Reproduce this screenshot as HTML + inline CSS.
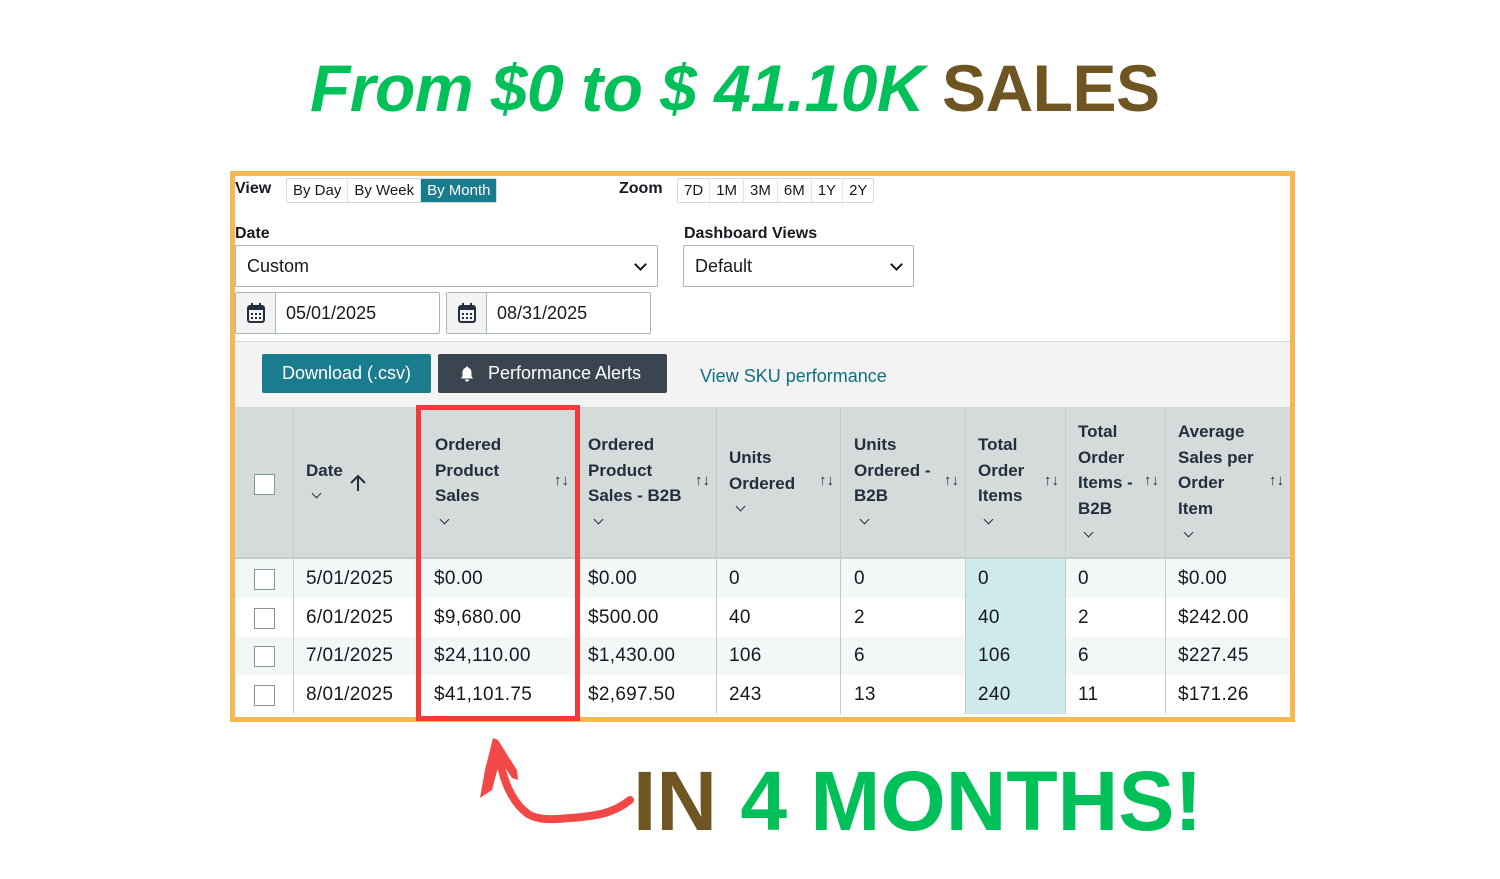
<!DOCTYPE html>
<html><head><meta charset="utf-8"><style>
*{margin:0;padding:0;box-sizing:border-box}
body{width:1500px;height:879px;background:#fff;position:relative;overflow:hidden;font-family:"Liberation Sans",sans-serif;color:#16191f}
.a{position:absolute}
.title{left:310px;top:50px;font-size:66px;font-weight:bold;font-style:italic;letter-spacing:-0.5px;white-space:nowrap}
.g{color:#00c05a}.b{color:#6e5522;font-style:normal}
.frame{left:230px;top:171px;width:1065px;height:551px;border:5px solid #f5b94f}
.seg{display:flex;border:1px solid #d5dbdb;border-radius:2px;font-size:15px}
.seg span{padding:3px 6px;border-right:1px solid #e3e6e6;color:#16191f}
.lbl{font-size:16px;font-weight:bold}
.sel{border:1px solid #aab7b8;border-radius:2px;height:42px;font-size:18px;padding:10px 11px;background:#fff}
.chev{position:absolute;right:12px;top:14px;width:9px;height:9px;border-right:2px solid #16191f;border-bottom:2px solid #16191f;transform:rotate(45deg)}
.cal{border:1px solid #aab7b8;border-radius:2px;height:42px;display:flex;background:#fff;font-size:18px}
.cal .ic{width:40px;border-right:1px solid #aab7b8;background:#f3f3f3;display:flex;align-items:center;justify-content:center}
.cal .tx{padding:10px 10px}
.hd{top:407px;left:235px;width:1055px;height:152px;background:#d5dbdb;border-bottom:2px solid #c4cbcb}
.col{position:absolute;top:407px;height:307px;border-left:1px solid #c4cbcb}
.h{position:absolute;font-size:17px;font-weight:bold;line-height:25.5px;color:#232f3e}
.row{position:absolute;left:235px;width:1055px;height:38.5px}
.c{position:absolute;font-size:19px;letter-spacing:.3px;color:#16191f}
.cb{position:absolute;left:254px;width:21px;height:21px;border:1px solid #879596;background:#fff}
.s{position:absolute;font-size:15px;font-weight:bold;color:#232f3e}
.v{position:absolute;width:7px;height:7px;border-right:1.5px solid #232f3e;border-bottom:1.5px solid #232f3e;transform:rotate(45deg)}
</style></head><body>
<div class="a title"><span class="g">From $0 to $ 41.10K</span> <span class="b">SALES</span></div>

<div class="a" style="left:235px;top:341px;width:1055px;height:66px;background:#f3f3f3;border-top:1px solid #d5dbdb"></div>

<div class="a lbl" style="left:235px;top:180px">View</div>
<div class="a seg" style="left:286px;top:178px"><span>By Day</span><span>By Week</span><span style="background:#1a7d8f;color:#fff;border:none">By Month</span></div>
<div class="a lbl" style="left:619px;top:180px">Zoom</div>
<div class="a seg" style="left:677px;top:178px"><span>7D</span><span>1M</span><span>3M</span><span>6M</span><span>1Y</span><span style="border:none">2Y</span></div>

<div class="a lbl" style="left:235px;top:225px">Date</div>
<div class="a sel" style="left:235px;top:245px;width:423px">Custom<div class="chev"></div></div>
<div class="a lbl" style="left:684px;top:225px">Dashboard Views</div>
<div class="a sel" style="left:683px;top:245px;width:231px">Default<div class="chev"></div></div>

<div class="a cal" style="left:235px;top:292px;width:205px"><div class="ic"><svg width="18" height="20" viewBox="0 0 18 20"><rect x="1" y="3" width="16" height="16" rx="2" fill="none" stroke="#232f3e" stroke-width="2"/><rect x="1" y="3" width="16" height="4" fill="#232f3e"/><rect x="4" y="0" width="2" height="5" fill="#232f3e"/><rect x="12" y="0" width="2" height="5" fill="#232f3e"/><g fill="#232f3e"><rect x="4" y="10" width="2" height="2"/><rect x="8" y="10" width="2" height="2"/><rect x="12" y="10" width="2" height="2"/><rect x="4" y="14" width="2" height="2"/><rect x="8" y="14" width="2" height="2"/><rect x="12" y="14" width="2" height="2"/></g></svg></div><div class="tx">05/01/2025</div></div>
<div class="a cal" style="left:446px;top:292px;width:205px"><div class="ic"><svg width="18" height="20" viewBox="0 0 18 20"><rect x="1" y="3" width="16" height="16" rx="2" fill="none" stroke="#232f3e" stroke-width="2"/><rect x="1" y="3" width="16" height="4" fill="#232f3e"/><rect x="4" y="0" width="2" height="5" fill="#232f3e"/><rect x="12" y="0" width="2" height="5" fill="#232f3e"/><g fill="#232f3e"><rect x="4" y="10" width="2" height="2"/><rect x="8" y="10" width="2" height="2"/><rect x="12" y="10" width="2" height="2"/><rect x="4" y="14" width="2" height="2"/><rect x="8" y="14" width="2" height="2"/><rect x="12" y="14" width="2" height="2"/></g></svg></div><div class="tx">08/31/2025</div></div>

<div class="a" style="left:262px;top:354px;width:169px;height:39px;background:#1a7d8f;border-radius:2px;color:#fff;font-size:18px;text-align:center;line-height:39px">Download (.csv)</div>
<div class="a" style="left:438px;top:354px;width:229px;height:39px;background:#3b4550;border-radius:2px;color:#fff;font-size:18px;line-height:39px;padding-left:50px"><svg class="a" style="left:22px;top:12px" width="14" height="16" viewBox="0 0 14 16"><path d="M7 0.5c-0.8 0-1.2 0.6-1.2 1.2C3.6 2.3 2.5 4 2.5 6.5V10L1 12.5h12L11.5 10V6.5C11.5 4 10.4 2.3 8.2 1.7 8.2 1.1 7.8 0.5 7 0.5z M5 13.5h4a2 2 0 0 1-4 0z" fill="#fff"/></svg>Performance Alerts</div>
<div class="a" style="left:700px;top:366px;font-size:18px;color:#0f6f80">View SKU performance</div>

<div class="a hd"></div>
<div class="row" style="top:559px;background:#f2f7f7"></div>
<div class="row" style="top:598px;background:#fff"></div>
<div class="row" style="top:637px;background:#f2f7f7"></div>
<div class="row" style="top:675px;background:#fff;height:39px"></div>
<div class="a" style="left:965px;top:559px;width:100px;height:155px;background:#cfeaea"></div>
<div class="col" style="left:293px"></div><div class="col" style="left:579px"></div><div class="col" style="left:716px"></div><div class="col" style="left:840px"></div><div class="col" style="left:965px"></div><div class="col" style="left:1065px"></div><div class="col" style="left:1165px"></div>

<div class="cb" style="top:474px"></div>
<div class="h" style="left:306px;top:458px">Date</div><div class="v" style="left:313px;top:490px"></div>
<svg class="a" style="left:348px;top:474px" width="20" height="18" viewBox="0 0 20 18"><path d="M10 17V2M3 9l7-7 7 7" fill="none" stroke="#232f3e" stroke-width="2"/></svg>
<div class="h" style="left:435px;top:432px">Ordered<br>Product<br>Sales</div><div class="v" style="left:441px;top:516px"></div><div class="s" style="left:554px;top:472px">↑↓</div>
<div class="h" style="left:588px;top:432px">Ordered<br>Product<br>Sales - B2B</div><div class="v" style="left:595px;top:516px"></div><div class="s" style="left:695px;top:472px">↑↓</div>
<div class="h" style="left:729px;top:445px">Units<br>Ordered</div><div class="v" style="left:737px;top:503px"></div><div class="s" style="left:819px;top:472px">↑↓</div>
<div class="h" style="left:854px;top:432px">Units<br>Ordered -<br>B2B</div><div class="v" style="left:861px;top:516px"></div><div class="s" style="left:944px;top:472px">↑↓</div>
<div class="h" style="left:978px;top:432px">Total<br>Order<br>Items</div><div class="v" style="left:985px;top:516px"></div><div class="s" style="left:1044px;top:472px">↑↓</div>
<div class="h" style="left:1078px;top:419px">Total<br>Order<br>Items -<br>B2B</div><div class="v" style="left:1085px;top:529px"></div><div class="s" style="left:1144px;top:472px">↑↓</div>
<div class="h" style="left:1178px;top:419px">Average<br>Sales per<br>Order<br>Item</div><div class="v" style="left:1185px;top:529px"></div><div class="s" style="left:1269px;top:472px">↑↓</div>

<div class="cb" style="top:569px"></div><div class="cb" style="top:608px"></div><div class="cb" style="top:646px"></div><div class="cb" style="top:685px"></div>
<div class="c" style="left:306px;top:568px">5/01/2025</div><div class="c" style="left:306px;top:607px">6/01/2025</div><div class="c" style="left:306px;top:645px">7/01/2025</div><div class="c" style="left:306px;top:684px">8/01/2025</div>
<div class="c" style="left:434px;top:568px">$0.00</div><div class="c" style="left:434px;top:607px">$9,680.00</div><div class="c" style="left:434px;top:645px">$24,110.00</div><div class="c" style="left:434px;top:684px">$41,101.75</div>
<div class="c" style="left:588px;top:568px">$0.00</div><div class="c" style="left:588px;top:607px">$500.00</div><div class="c" style="left:588px;top:645px">$1,430.00</div><div class="c" style="left:588px;top:684px">$2,697.50</div>
<div class="c" style="left:729px;top:568px">0</div><div class="c" style="left:729px;top:607px">40</div><div class="c" style="left:729px;top:645px">106</div><div class="c" style="left:729px;top:684px">243</div>
<div class="c" style="left:854px;top:568px">0</div><div class="c" style="left:854px;top:607px">2</div><div class="c" style="left:854px;top:645px">6</div><div class="c" style="left:854px;top:684px">13</div>
<div class="c" style="left:978px;top:568px">0</div><div class="c" style="left:978px;top:607px">40</div><div class="c" style="left:978px;top:645px">106</div><div class="c" style="left:978px;top:684px">240</div>
<div class="c" style="left:1078px;top:568px">0</div><div class="c" style="left:1078px;top:607px">2</div><div class="c" style="left:1078px;top:645px">6</div><div class="c" style="left:1078px;top:684px">11</div>
<div class="c" style="left:1178px;top:568px">$0.00</div><div class="c" style="left:1178px;top:607px">$242.00</div><div class="c" style="left:1178px;top:645px">$227.45</div><div class="c" style="left:1178px;top:684px">$171.26</div>

<div class="a frame"></div>
<div class="a" style="left:416px;top:405px;width:164px;height:316px;border:5px solid #f23a3a"></div>

<svg class="a" style="left:470px;top:730px" width="170" height="130" viewBox="0 0 170 130">
<path d="M160 70C145 82 130 86 100 88 80 90 68 90 58 84 44 74 36 56 32 40 L27 18" fill="none" stroke="#f24848" stroke-width="8" stroke-linecap="round"/>
<path d="M10 68L15 40 23 8 28 10 38 26 47 40 48 50 42 48 30 30 22 60z" fill="#f24848"/>
</svg>
<div class="a" style="left:633px;top:760px;font-size:84px;font-weight:bold;white-space:nowrap;line-height:82px"><span class="b">IN</span> <span class="g" style="font-style:normal">4 MONTHS!</span></div>
</body></html>
